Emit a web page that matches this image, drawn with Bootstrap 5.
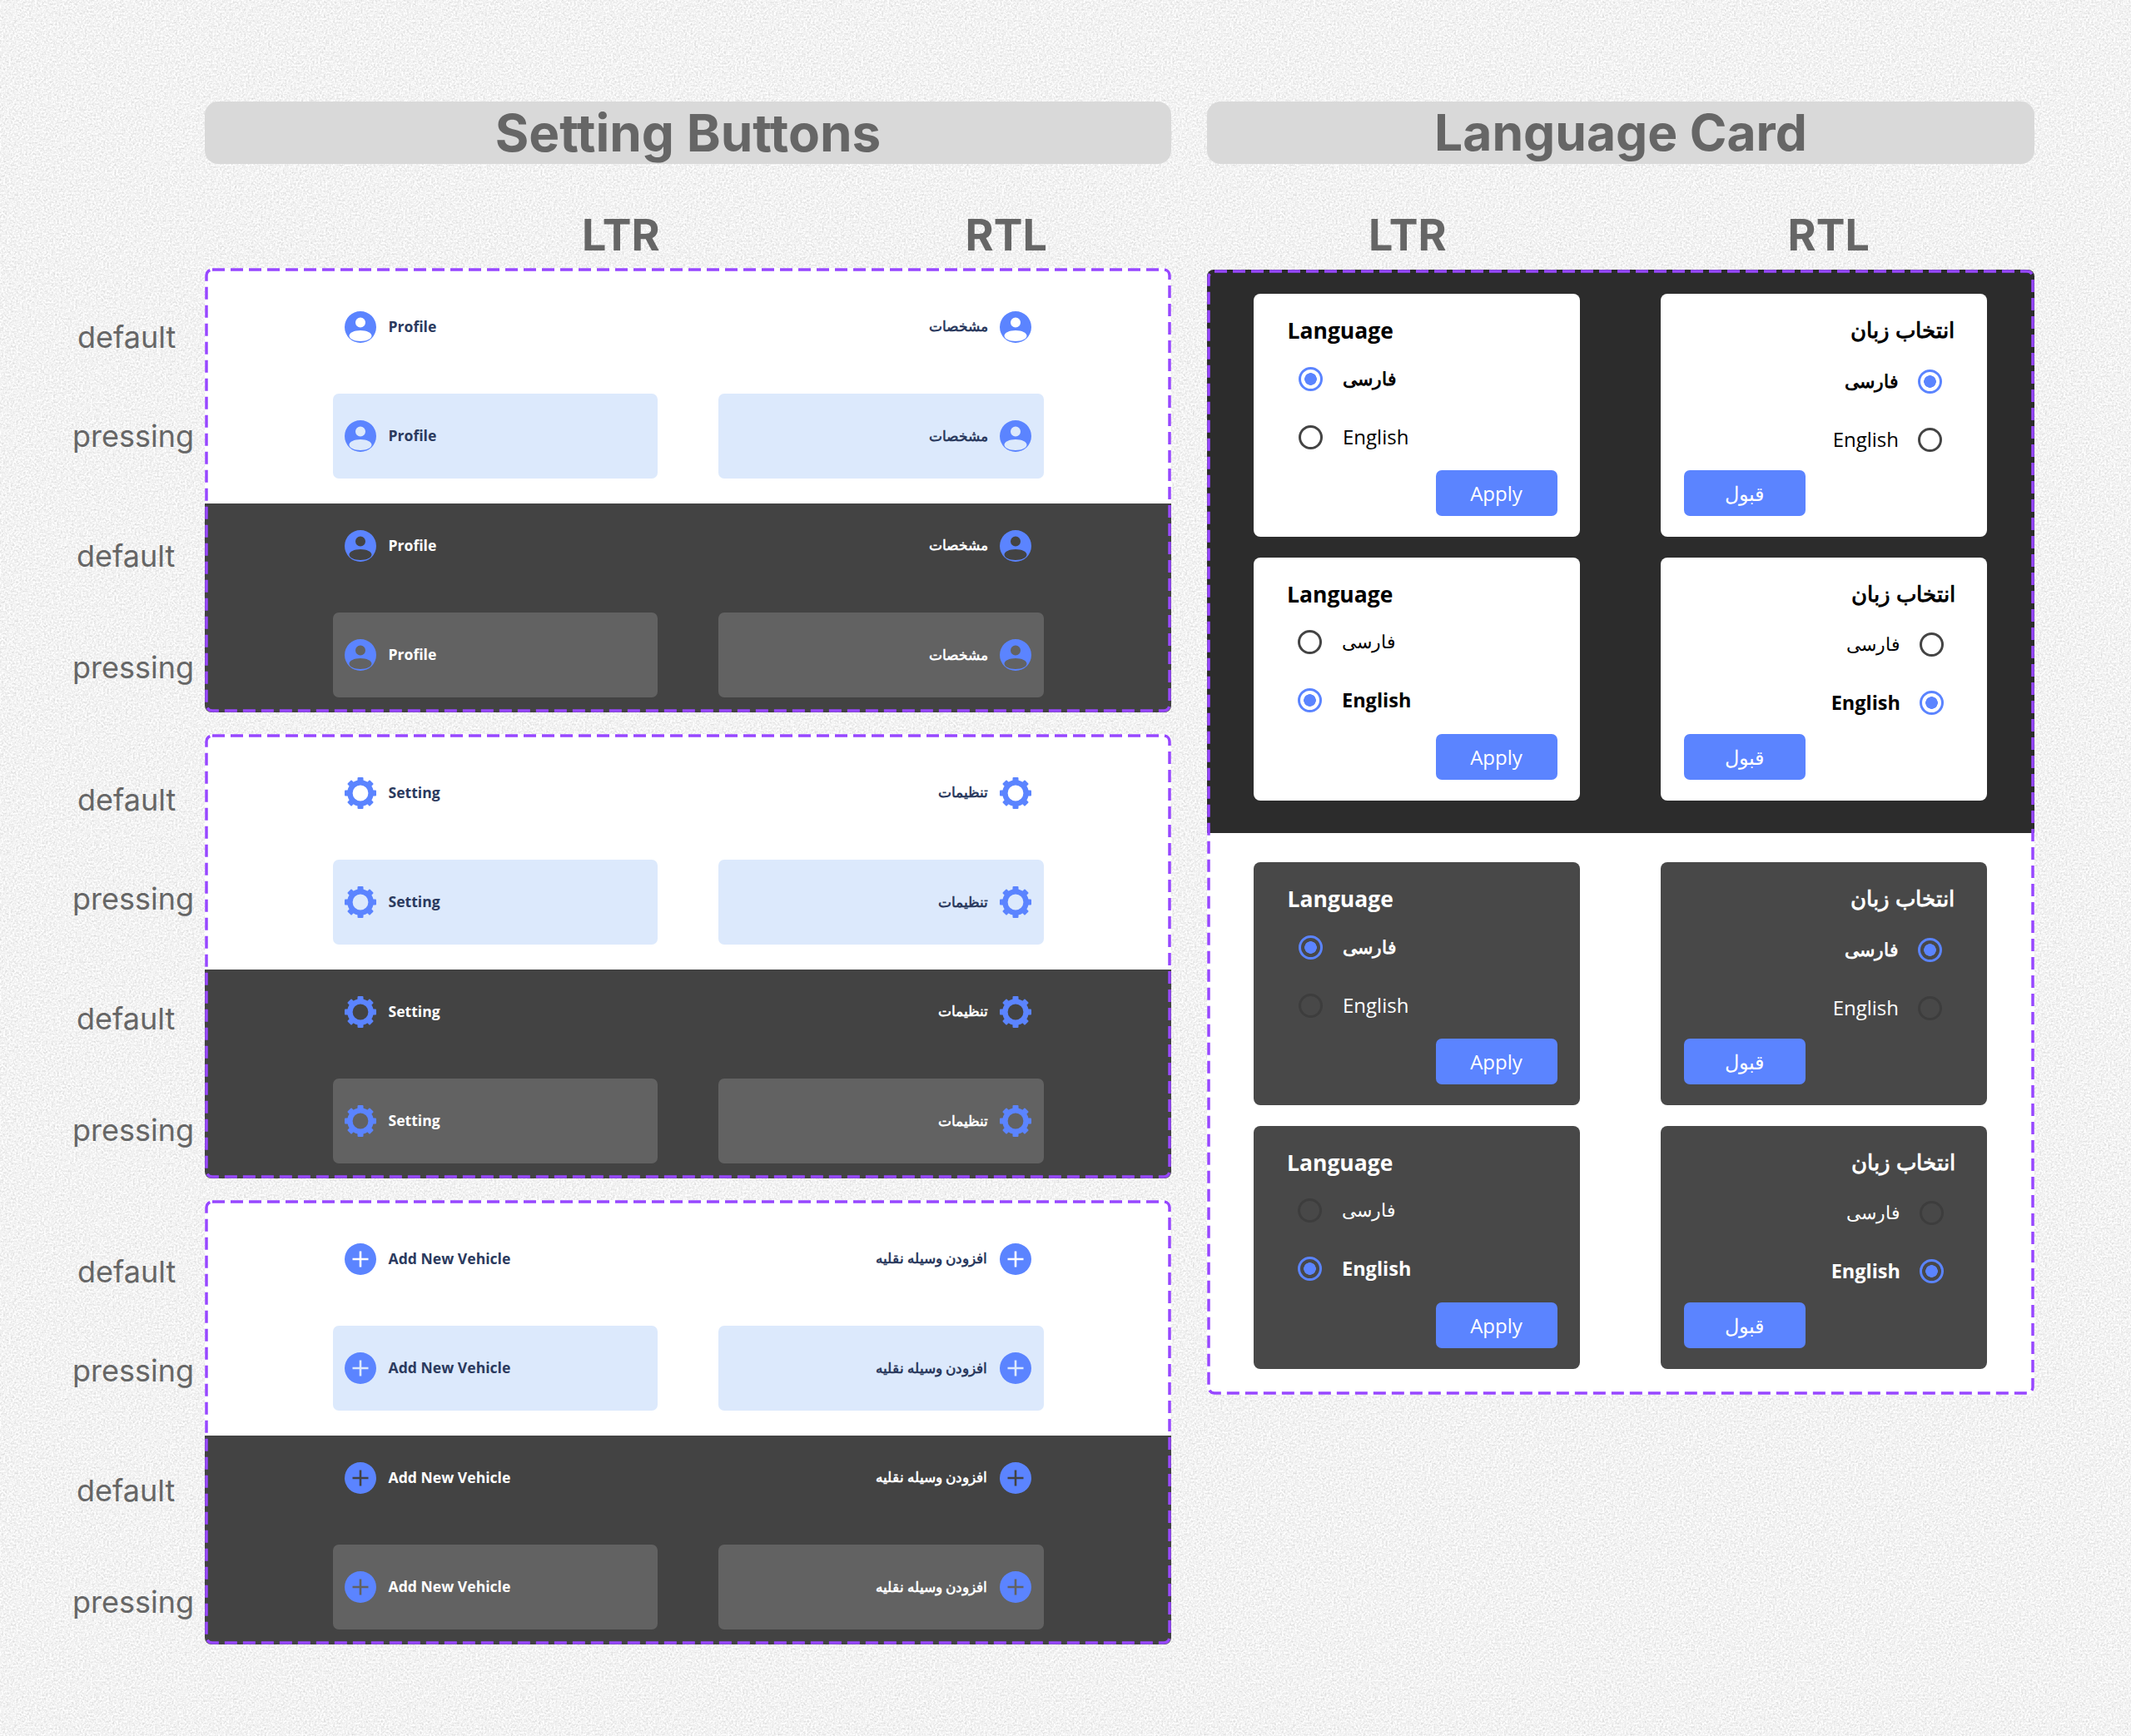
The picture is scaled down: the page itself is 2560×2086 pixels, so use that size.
<!doctype html>
<html lang="en">
<head>
<meta charset="utf-8">
<title>Setting Buttons and Language Card</title>
<link href="https://cdn.jsdelivr.net/npm/bootstrap@5.3.0/dist/css/bootstrap.min.css" rel="stylesheet">
<style>
body{margin:0;width:2560px;height:2086px;background-color:#f2f2f2;background-image:url("data:image/svg+xml,%3Csvg xmlns='http://www.w3.org/2000/svg' width='512' height='512'%3E%3Cfilter id='n' color-interpolation-filters='sRGB'%3E%3CfeTurbulence type='fractalNoise' baseFrequency='.45' numOctaves='3' stitchTiles='stitch'/%3E%3CfeColorMatrix values='.17 .17 0 0 .78 .17 .17 0 0 .78 .17 .17 0 0 .78 0 0 0 0 1'/%3E%3C/filter%3E%3Crect width='512' height='512' filter='url(%23n)'/%3E%3C/svg%3E");font-family:"Open Sans","Noto Sans",sans-serif}
.sheet{padding-top:122px}
.leftside{width:1407px}
.rightside{width:994px;margin-left:43px}
.bighead{height:75px;background:#d9d9d9;border-radius:16px;color:#666;font:700 62px/75px Inter,sans-serif;text-align:center;margin:0}
.rightside .bighead{font-size:60.500px}
.leftbar{margin-left:246px}
.dirrow{font:700 52px/60px Inter,sans-serif;color:#666;padding-top:56px;height:125px}
.dirrow span{display:block}
.dl1{margin-left:453px}.dl2{margin-left:367px}
.dr1{margin-left:194px}.dr2{margin-left:410px}
.dirrow-r{height:127px}
.panelrow+.panelrow{margin-top:26px}
.statecol{width:246px;flex:none;padding-top:59px}
.statecol.upper{padding-top:55px}
.statecol.lower{padding-top:62px}
.statelab{font:400 36px/48px Inter,sans-serif;color:#666}
.statelab:nth-child(1){margin-left:93px}
.statelab:nth-child(2){margin-left:87px;margin-top:71px}
.statelab:nth-child(3){margin-left:92px;margin-top:96px}
.statelab:nth-child(4){margin-left:87px;margin-top:86px}
.setpanel{position:relative;width:1161px;height:534px;border-radius:8px;overflow:hidden;background:#fff}
.dashframe{position:absolute;inset:0;width:100%;height:100%;pointer-events:none}
.dashframe rect{x:2px;y:2px;width:calc(100% - 4px);height:calc(100% - 4px);rx:7px;ry:7px;fill:none;stroke:#9747ff;stroke-width:3.500;stroke-dasharray:15 7}
.litezone{padding:19.500px 0 29.500px 153.500px;display:flex;flex-direction:column;gap:29.500px}
.darkzone{background:#434343;padding:0 0 18px 153.500px;display:flex;flex-direction:column;gap:29.500px}
.btnpair{display:flex;gap:73px}
.setbtn{width:390.500px;height:102px;padding:0 14.500px;gap:14.500px;border:0;border-radius:7px;font-weight:700;font-size:17.600px;line-height:1;color:#2b3a5e;background:transparent}
.setbtn[dir=rtl]{font-size:16.600px}
.setbtn:hover,.setbtn:active{background:transparent;color:#2b3a5e}
.setbtn.pressed,.setbtn.pressed:hover{background:#dce9fc}
.darkzone .setbtn,.darkzone .setbtn:hover{color:#fff}
.darkzone .setbtn.pressed,.darkzone .setbtn.pressed:hover{background:#626262}
.glyph{width:38px;height:38px;flex:none;fill:#5b84ff}
.gearring{fill:none;stroke:#5b84ff;stroke-width:6.400}
.langpanel{position:relative;height:1352px;border-radius:8px;overflow:hidden;background:#fff}
.langblack{background:#2c2c2c;height:677px;padding:29px 0 0 56px}
.langwhite{height:675px;padding:35px 0 0 56px}
.langgrid{display:grid;grid-template-columns:392px 392px;column-gap:97px;row-gap:24.500px}
.langcard{height:292px;border:0;border-radius:8px;background:#fff;color:#000;padding:22px 27.500px 0 40.500px}
.langcard[dir=rtl]{padding:21px 39px 0 27.500px}
.langcard.shift:not([dir=rtl]){padding-left:40px}
.langcard[dir=rtl].shift{padding-right:38px}
.langcard.inv{background:#484848;color:#fff}
.cardtitle{font:700 26.500px/44px "Open Sans","Noto Sans",sans-serif;margin:0}
.langcard[dir=rtl] .cardtitle{font-size:25.500px}
.optlist{height:145px;margin-top:1px}
.langcard[dir=rtl] .optlist{margin-top:5px;height:142px}
.optrow{height:70px;display:flex;align-items:center;gap:24px;margin:0 0 0 13.500px;font-size:24px}
.langcard.shift .optrow{margin-left:13px}
.langcard[dir=rtl] .optrow{margin:0 15px 0 0;gap:23px}
.langcard[dir=rtl].shift .optrow{margin-right:14px}
.optrow.sel{font-weight:700;font-size:23.500px}
.farsiword{font-size:22px;line-height:1;padding-bottom:3px}
.radiodot.form-check-input{width:29px;height:29px;margin:0;flex:none;background:transparent;border:3px solid #444;box-shadow:none}
.inv .radiodot.form-check-input{border-color:#3d3d3d}
.radiodot.form-check-input:checked{background:radial-gradient(circle,#5b84ff 0 7px,transparent 7.600px);border-color:#5b84ff}
.applybtn,.applybtn:hover{width:146px;height:55px;padding:0;border:0;border-radius:7px;background:#5b84ff;color:#fff;font-size:24px;line-height:55px}
</style>
</head>
<body>
<svg width="0" height="0" class="d-block" aria-hidden="true">
<symbol id="i-user" viewBox="0 0 38 38"><path fill-rule="evenodd" d="M19 0a19 19 0 1 0 0 38a19 19 0 1 0 0-38zM19 7.500a6 6 0 1 1 0 12a6 6 0 1 1 0-12zM19 23c7.500 0 13.500 2.900 13.500 6.500S26.500 36 19 36S5.500 33.100 5.500 29.500S11.500 23 19 23z"/></symbol>
<symbol id="i-gear" viewBox="0 0 38 38"><circle class="gearring" cx="19" cy="19" r="12.600"/><g><rect x="15.500" y="0" width="7" height="6" rx="1"/><rect x="15.500" y="0" width="7" height="6" rx="1" transform="rotate(45 19 19)"/><rect x="15.500" y="0" width="7" height="6" rx="1" transform="rotate(90 19 19)"/><rect x="15.500" y="0" width="7" height="6" rx="1" transform="rotate(135 19 19)"/><rect x="15.500" y="0" width="7" height="6" rx="1" transform="rotate(180 19 19)"/><rect x="15.500" y="0" width="7" height="6" rx="1" transform="rotate(225 19 19)"/><rect x="15.500" y="0" width="7" height="6" rx="1" transform="rotate(270 19 19)"/><rect x="15.500" y="0" width="7" height="6" rx="1" transform="rotate(315 19 19)"/></g></symbol>
<symbol id="i-plus" viewBox="0 0 38 38"><path fill-rule="evenodd" d="M19 0a19 19 0 1 0 0 38a19 19 0 1 0 0-38zM17.700 9.500h2.600v8.200h8.200v2.600h-8.200v8.200h-2.600v-8.200H9.500v-2.600h8.200z"/></symbol>
</svg>
<main class="sheet d-flex align-items-start">
<div class="leftside">
<h1 class="bighead leftbar">Setting Buttons</h1>
<div class="dirrow leftbar d-flex"><span class="dl1">LTR</span><span class="dl2">RTL</span></div>

<section class="panelrow d-flex">
<div class="statecol"><div class="statelab">default</div><div class="statelab">pressing</div><div class="statelab">default</div><div class="statelab">pressing</div></div>
<div class="setpanel">
<div class="litezone">
<div class="btnpair"><button class="btn setbtn d-flex align-items-center"><svg class="glyph"><use href="#i-user"/></svg>Profile</button><button dir="rtl" class="btn setbtn d-flex align-items-center"><svg class="glyph"><use href="#i-user"/></svg>مشخصات</button></div>
<div class="btnpair"><button class="btn setbtn pressed d-flex align-items-center"><svg class="glyph"><use href="#i-user"/></svg>Profile</button><button dir="rtl" class="btn setbtn pressed d-flex align-items-center"><svg class="glyph"><use href="#i-user"/></svg>مشخصات</button></div>
</div>
<div class="darkzone">
<div class="btnpair"><button class="btn setbtn d-flex align-items-center"><svg class="glyph"><use href="#i-user"/></svg>Profile</button><button dir="rtl" class="btn setbtn d-flex align-items-center"><svg class="glyph"><use href="#i-user"/></svg>مشخصات</button></div>
<div class="btnpair"><button class="btn setbtn pressed d-flex align-items-center"><svg class="glyph"><use href="#i-user"/></svg>Profile</button><button dir="rtl" class="btn setbtn pressed d-flex align-items-center"><svg class="glyph"><use href="#i-user"/></svg>مشخصات</button></div>
</div>
<svg class="dashframe" aria-hidden="true"><rect/></svg>
</div>
</section>

<section class="panelrow d-flex">
<div class="statecol upper"><div class="statelab">default</div><div class="statelab">pressing</div><div class="statelab">default</div><div class="statelab">pressing</div></div>
<div class="setpanel">
<div class="litezone">
<div class="btnpair"><button class="btn setbtn d-flex align-items-center"><svg class="glyph"><use href="#i-gear"/></svg>Setting</button><button dir="rtl" class="btn setbtn d-flex align-items-center"><svg class="glyph"><use href="#i-gear"/></svg>تنظیمات</button></div>
<div class="btnpair"><button class="btn setbtn pressed d-flex align-items-center"><svg class="glyph"><use href="#i-gear"/></svg>Setting</button><button dir="rtl" class="btn setbtn pressed d-flex align-items-center"><svg class="glyph"><use href="#i-gear"/></svg>تنظیمات</button></div>
</div>
<div class="darkzone">
<div class="btnpair"><button class="btn setbtn d-flex align-items-center"><svg class="glyph"><use href="#i-gear"/></svg>Setting</button><button dir="rtl" class="btn setbtn d-flex align-items-center"><svg class="glyph"><use href="#i-gear"/></svg>تنظیمات</button></div>
<div class="btnpair"><button class="btn setbtn pressed d-flex align-items-center"><svg class="glyph"><use href="#i-gear"/></svg>Setting</button><button dir="rtl" class="btn setbtn pressed d-flex align-items-center"><svg class="glyph"><use href="#i-gear"/></svg>تنظیمات</button></div>
</div>
<svg class="dashframe" aria-hidden="true"><rect/></svg>
</div>
</section>

<section class="panelrow d-flex">
<div class="statecol lower"><div class="statelab">default</div><div class="statelab">pressing</div><div class="statelab">default</div><div class="statelab">pressing</div></div>
<div class="setpanel">
<div class="litezone">
<div class="btnpair"><button class="btn setbtn d-flex align-items-center"><svg class="glyph"><use href="#i-plus"/></svg>Add New Vehicle</button><button dir="rtl" class="btn setbtn d-flex align-items-center"><svg class="glyph"><use href="#i-plus"/></svg>افزودن وسیله نقلیه</button></div>
<div class="btnpair"><button class="btn setbtn pressed d-flex align-items-center"><svg class="glyph"><use href="#i-plus"/></svg>Add New Vehicle</button><button dir="rtl" class="btn setbtn pressed d-flex align-items-center"><svg class="glyph"><use href="#i-plus"/></svg>افزودن وسیله نقلیه</button></div>
</div>
<div class="darkzone">
<div class="btnpair"><button class="btn setbtn d-flex align-items-center"><svg class="glyph"><use href="#i-plus"/></svg>Add New Vehicle</button><button dir="rtl" class="btn setbtn d-flex align-items-center"><svg class="glyph"><use href="#i-plus"/></svg>افزودن وسیله نقلیه</button></div>
<div class="btnpair"><button class="btn setbtn pressed d-flex align-items-center"><svg class="glyph"><use href="#i-plus"/></svg>Add New Vehicle</button><button dir="rtl" class="btn setbtn pressed d-flex align-items-center"><svg class="glyph"><use href="#i-plus"/></svg>افزودن وسیله نقلیه</button></div>
</div>
<svg class="dashframe" aria-hidden="true"><rect/></svg>
</div>
</section>
</div>

<div class="rightside">
<h1 class="bighead">Language Card</h1>
<div class="dirrow dirrow-r d-flex"><span class="dr1">LTR</span><span class="dr2">RTL</span></div>
<div class="langpanel">
<div class="langblack"><div class="langgrid">
<div class="card langcard"><h2 class="cardtitle">Language</h2><div class="optlist"><label class="optrow sel"><input class="form-check-input radiodot" type="radio" name="a1" checked><span class="farsiword">فارسی</span></label><label class="optrow"><input class="form-check-input radiodot" type="radio" name="a1">English</label></div><div class="d-flex justify-content-end"><button class="btn applybtn">Apply</button></div></div>
<div class="card langcard" dir="rtl"><h2 class="cardtitle">انتخاب زبان</h2><div class="optlist"><label class="optrow sel"><input class="form-check-input radiodot" type="radio" name="a2" checked><span class="farsiword">فارسی</span></label><label class="optrow"><input class="form-check-input radiodot" type="radio" name="a2">English</label></div><div class="d-flex justify-content-end"><button class="btn applybtn">قبول</button></div></div>
<div class="card langcard shift"><h2 class="cardtitle">Language</h2><div class="optlist"><label class="optrow"><input class="form-check-input radiodot" type="radio" name="a3"><span class="farsiword">فارسی</span></label><label class="optrow sel"><input class="form-check-input radiodot" type="radio" name="a3" checked>English</label></div><div class="d-flex justify-content-end"><button class="btn applybtn">Apply</button></div></div>
<div class="card langcard shift" dir="rtl"><h2 class="cardtitle">انتخاب زبان</h2><div class="optlist"><label class="optrow"><input class="form-check-input radiodot" type="radio" name="a4"><span class="farsiword">فارسی</span></label><label class="optrow sel"><input class="form-check-input radiodot" type="radio" name="a4" checked>English</label></div><div class="d-flex justify-content-end"><button class="btn applybtn">قبول</button></div></div>
</div></div>
<div class="langwhite"><div class="langgrid">
<div class="card langcard inv"><h2 class="cardtitle">Language</h2><div class="optlist"><label class="optrow sel"><input class="form-check-input radiodot" type="radio" name="b1" checked><span class="farsiword">فارسی</span></label><label class="optrow"><input class="form-check-input radiodot" type="radio" name="b1">English</label></div><div class="d-flex justify-content-end"><button class="btn applybtn">Apply</button></div></div>
<div class="card langcard inv" dir="rtl"><h2 class="cardtitle">انتخاب زبان</h2><div class="optlist"><label class="optrow sel"><input class="form-check-input radiodot" type="radio" name="b2" checked><span class="farsiword">فارسی</span></label><label class="optrow"><input class="form-check-input radiodot" type="radio" name="b2">English</label></div><div class="d-flex justify-content-end"><button class="btn applybtn">قبول</button></div></div>
<div class="card langcard inv shift"><h2 class="cardtitle">Language</h2><div class="optlist"><label class="optrow"><input class="form-check-input radiodot" type="radio" name="b3"><span class="farsiword">فارسی</span></label><label class="optrow sel"><input class="form-check-input radiodot" type="radio" name="b3" checked>English</label></div><div class="d-flex justify-content-end"><button class="btn applybtn">Apply</button></div></div>
<div class="card langcard inv shift" dir="rtl"><h2 class="cardtitle">انتخاب زبان</h2><div class="optlist"><label class="optrow"><input class="form-check-input radiodot" type="radio" name="b4"><span class="farsiword">فارسی</span></label><label class="optrow sel"><input class="form-check-input radiodot" type="radio" name="b4" checked>English</label></div><div class="d-flex justify-content-end"><button class="btn applybtn">قبول</button></div></div>
</div></div>
<svg class="dashframe" aria-hidden="true"><rect/></svg>
</div>
</div>
</main>
<script src="https://cdn.jsdelivr.net/npm/bootstrap@5.3.0/dist/js/bootstrap.bundle.min.js"></script>
</body>
</html>
